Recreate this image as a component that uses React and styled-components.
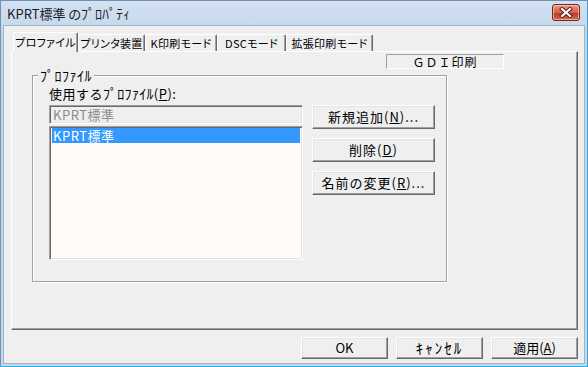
import React from 'react'
import styled, { createGlobalStyle } from 'styled-components'

const GlobalStyle = createGlobalStyle`
  html, body {
    margin: 0;
    padding: 0;
    background: #c4d7ec;
  }
  body {
    font-family: "Noto Sans CJK JP", "Liberation Sans", sans-serif;
    font-size: 12px;
    color: #000;
  }
`

const Window = styled.div`
  width: 588px;
  height: 367px;
  box-sizing: border-box;
  display: flex;
  flex-direction: column;
  background: linear-gradient(#d3e1f1, #c1d4ea 40px, #c4d7ec);
  border: 1px solid #6f93b8;
  border-right-color: #3aa6d8;
  border-bottom-color: #2cb4e6;
`

const TitleBar = styled.div`
  height: 24px;
  display: flex;
  align-items: center;
  justify-content: space-between;
  padding: 0 7px 0 6px;
`

const TitleText = styled.span`
  font-size: 13px;
  line-height: 14px;
  color: #1a1a2a;
  font-feature-settings: "palt";
`

const CloseButton = styled.div`
  width: 28px;
  height: 17px;
  margin-bottom: 2px;
  display: flex;
  align-items: center;
  justify-content: center;
  box-sizing: border-box;
  border: 1px solid #7a2418;
  border-radius: 3px;
  background: linear-gradient(#e59b8e, #d2614c 50%, #bd3c24 55%, #d66c50);
  box-shadow: inset 0 0 0 1px rgba(255, 220, 210, 0.6);
`

const Client = styled.div`
  flex: 1;
  margin: 0 2px 2px 2px;
  border: 1px solid #9fb3c8;
  background: #efefef;
  display: flex;
  flex-direction: column;
  padding: 6px 6px 0 7px;
`

const TabStrip = styled.div`
  height: 19px;
  display: flex;
  align-items: flex-end;
  padding-left: 2px;
`

const Tab = styled.div`
  position: relative;
  z-index: ${p => (p.$active ? 2 : 0)};
  width: ${p => p.$w}px;
  height: ${p => (p.$active ? 20 : 17)}px;
  margin-bottom: ${p => (p.$active ? -1 : 0)}px;
  box-sizing: border-box;
  display: flex;
  align-items: center;
  justify-content: center;
  padding-bottom: ${p => (p.$active ? 2 : 0)}px;
  background: #efefef;
  border-top: 1px solid #fff;
  border-left: 1px solid #fff;
  border-right: 1px solid #696969;
  box-shadow: inset -1px 0 0 #a0a0a0;
  border-radius: 2px 2px 0 0;
  font-size: 11px;
  line-height: 14px;
  letter-spacing: 0.3px;
  white-space: nowrap;
  font-feature-settings: "palt";
`

const Panel = styled.div`
  position: relative;
  z-index: 1;
  height: 279px;
  box-sizing: border-box;
  border-top: 1px solid #fff;
  border-left: 1px solid #fff;
  border-right: 1px solid #696969;
  border-bottom: 1px solid #696969;
  box-shadow: inset -1px -1px 0 #a0a0a0;
  display: flex;
  flex-direction: column;
`

const ModeRow = styled.div`
  display: flex;
  justify-content: flex-end;
  padding: 2px 73px 0 0;
`

const ModeBox = styled.div`
  width: 118px;
  height: 15px;
  box-sizing: border-box;
  border-top: 1px solid #a0a0a0;
  border-left: 1px solid #a0a0a0;
  border-right: 1px solid #fff;
  border-bottom: 1px solid #fff;
  display: flex;
  align-items: center;
  justify-content: center;
  font-size: 12px;
  line-height: 13px;
  letter-spacing: 1px;
`

const GroupBox = styled.div`
  position: relative;
  width: 415px;
  height: 207px;
  margin: 6px 0 0 20px;
  box-sizing: border-box;
  border: 1px solid #a0a0a0;
  box-shadow: inset 1px 1px 0 #fff, 1px 1px 0 #fff;
  padding: 10px 0 0 16px;
`

const Legend = styled.span`
  position: absolute;
  top: -8px;
  left: 5px;
  padding: 0 2px;
  background: #efefef;
  font-size: 12px;
  line-height: 15px;
`

const Kana = styled.span`
  font-size: ${p => p.$size || 13}px;
  letter-spacing: ${p => p.$track || 0}px;
`

const FieldLabel = styled.div`
  font-size: 13px;
  line-height: 14px;
  letter-spacing: 0.5px;
  margin-bottom: 4px;
`

const GroupRow = styled.div`
  display: flex;
  gap: 9px;
  align-items: flex-start;
`

const ListColumn = styled.div`
  width: 254px;
  display: flex;
  flex-direction: column;
  gap: 2px;
`

const sunken = `
  box-sizing: border-box;
  border-top: 1px solid #a0a0a0;
  border-left: 1px solid #a0a0a0;
  border-right: 1px solid #fff;
  border-bottom: 1px solid #fff;
  box-shadow: inset 1px 1px 0 #696969, inset -1px -1px 0 #e3e3e3;
`

const TextField = styled.div`
  ${sunken}
  height: 19px;
  padding: 0 0 0 3px;
  display: flex;
  align-items: center;
  color: #8c8c8c;
  font-size: 13px;
  letter-spacing: 0.5px;
`

const ListBox = styled.div`
  ${sunken}
  height: 134px;
  background: #fffbf9;
  padding: 1px 2px 2px 2px;
`

const ListItem = styled.div`
  height: 15px;
  padding-left: 1px;
  display: flex;
  align-items: center;
  background: ${p => (p.$selected ? '#3399ff' : 'transparent')};
  color: ${p => (p.$selected ? '#fff' : '#000')};
  font-size: 13px;
  letter-spacing: 0.5px;
`

const ButtonColumn = styled.div`
  width: 123px;
  display: flex;
  flex-direction: column;
  gap: 9px;
`

const Button = styled.div`
  width: ${p => p.$w || 123}px;
  height: ${p => p.$h || 24}px;
  box-sizing: border-box;
  background: #efefef;
  border-top: 1px solid #fff;
  border-left: 1px solid #fff;
  border-right: 1px solid #696969;
  border-bottom: 1px solid #696969;
  box-shadow: inset -1px -1px 0 #a0a0a0, inset 1px 1px 0 #e3e3e3;
  display: flex;
  align-items: center;
  justify-content: center;
  font-size: 13px;
  line-height: 14px;
  letter-spacing: ${p => (p.$spaced ? 1 : 0)}px;
  white-space: nowrap;
`

const Key = styled.span`
  text-decoration: underline;
  text-underline-offset: 1px;
`

const Footer = styled.div`
  display: flex;
  justify-content: flex-end;
  gap: 8px;
  padding: 7px 0 0 0;
`

const tabs = [
  { label: 'プロファイル', w: 65, active: true },
  { label: 'プリンタ装置', w: 67 },
  { label: 'K印刷モード', w: 72 },
  { label: 'DSCモード', w: 69 },
  { label: '拡張印刷モード', w: 87 },
]

const CloseIcon = () => (
  <svg width="14" height="11" viewBox="0 0 14 11">
    <path d="M3 2 L11 9 M11 2 L3 9" stroke="#5a1a10" strokeWidth="4" strokeLinecap="square" />
    <path d="M3 2 L11 9 M11 2 L3 9" stroke="#fff" strokeWidth="2.2" strokeLinecap="square" />
  </svg>
)

export default function App() {
  return (
    <>
      <GlobalStyle />
      <Window>
        <TitleBar>
          <TitleText>
            KPRT標準 の<Kana $size={14}>ﾌﾟﾛﾊﾟﾃｨ</Kana>
          </TitleText>
          <CloseButton>
            <CloseIcon />
          </CloseButton>
        </TitleBar>
        <Client>
          <TabStrip>
            {tabs.map(t => (
              <Tab key={t.label} $w={t.w} $active={t.active}>
                {t.label}
              </Tab>
            ))}
          </TabStrip>
          <Panel>
            <ModeRow>
              <ModeBox>ＧＤＩ印刷</ModeBox>
            </ModeRow>
            <GroupBox>
              <Legend>
                <Kana $size={14} $track={0.5}>ﾌﾟﾛﾌｧｲﾙ</Kana>
              </Legend>
              <FieldLabel>
                使用する<Kana $size={14} $track={0.3}>ﾌﾟﾛﾌｧｲﾙ</Kana>(<Key>P</Key>):
              </FieldLabel>
              <GroupRow>
                <ListColumn>
                  <TextField>KPRT標準</TextField>
                  <ListBox>
                    <ListItem $selected>KPRT標準</ListItem>
                  </ListBox>
                </ListColumn>
                <ButtonColumn>
                  <Button $spaced>
                    新規追加(<Key>N</Key>)...
                  </Button>
                  <Button $spaced>
                    削除(<Key>D</Key>)
                  </Button>
                  <Button $spaced>
                    名前の変更(<Key>R</Key>)...
                  </Button>
                </ButtonColumn>
              </GroupRow>
            </GroupBox>
          </Panel>
          <Footer>
            <Button $w={87} $h={22}>OK</Button>
            <Button $w={87} $h={22}>
              <Kana $size={15} $track={2}>ｷｬﾝｾﾙ</Kana>
            </Button>
            <Button $w={87} $h={22}>
              適用(<Key>A</Key>)
            </Button>
          </Footer>
        </Client>
      </Window>
    </>
  )
}
